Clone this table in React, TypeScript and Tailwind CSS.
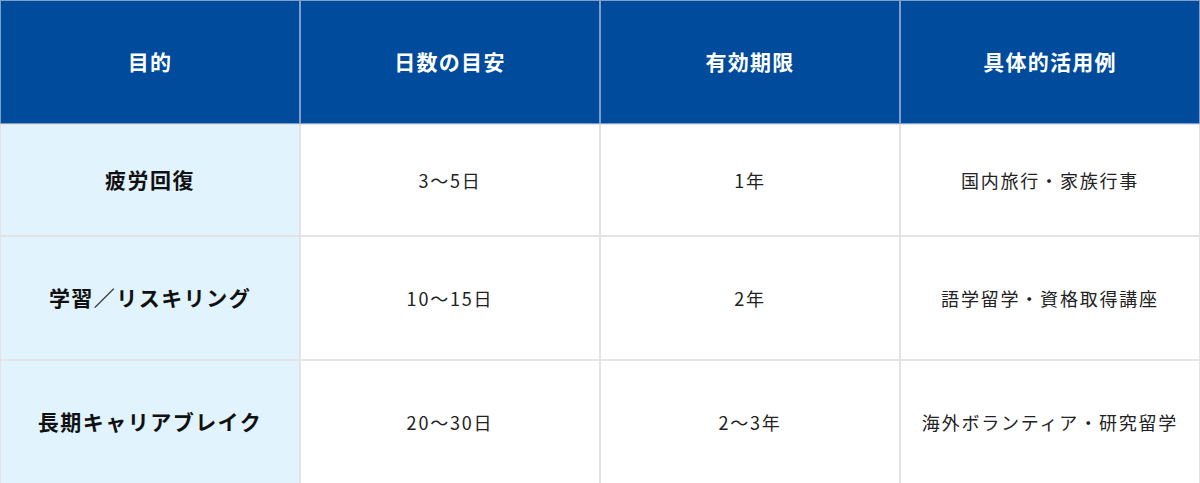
import React from "react";

const font = { fontFamily: '"Noto Sans CJK JP", "Noto Sans", sans-serif' };

const headers = ["目的", "日数の目安", "有効期限", "具体的活用例"];
const rows = [
  { h: "h-[112px]", c: ["疲労回復", "3〜5日", "1年", "国内旅行・家族行事"] },
  { h: "h-[124px]", c: ["学習／リスキリング", "10〜15日", "2年", "語学留学・資格取得講座"] },
  { h: "h-[124px]", c: ["長期キャリアブレイク", "20〜30日", "2〜3年", "海外ボランティア・研究留学"] },
];

export default function App() {
  return (
    <div className="w-[1200px] h-[483px] overflow-hidden bg-white" style={font}>
      <div className="grid grid-cols-4">
        {headers.map((t) => (
          <div
            key={t}
            className="h-[124px] flex items-center justify-center bg-[#004b9c] border border-[#7f9ec8] text-white text-[21px] font-bold tracking-[0.06em]"
          >
            {t}
          </div>
        ))}
        {rows.map((r, ri) =>
          r.c.map((t, ci) => (
            <div
              key={ri + "-" + ci}
              className={
                ci === 0
                  ? `${r.h} flex items-center justify-center bg-[#e1f3fd] border border-[#e3e3e3] text-[#111] text-[21px] font-bold tracking-[0.07em]`
                  : `${r.h} flex items-center justify-center bg-white border border-[#e3e3e3] text-[#222] text-[18px] tracking-[0.1em]`
              }
            >
              {t}
            </div>
          ))
        )}
      </div>
    </div>
  );
}
